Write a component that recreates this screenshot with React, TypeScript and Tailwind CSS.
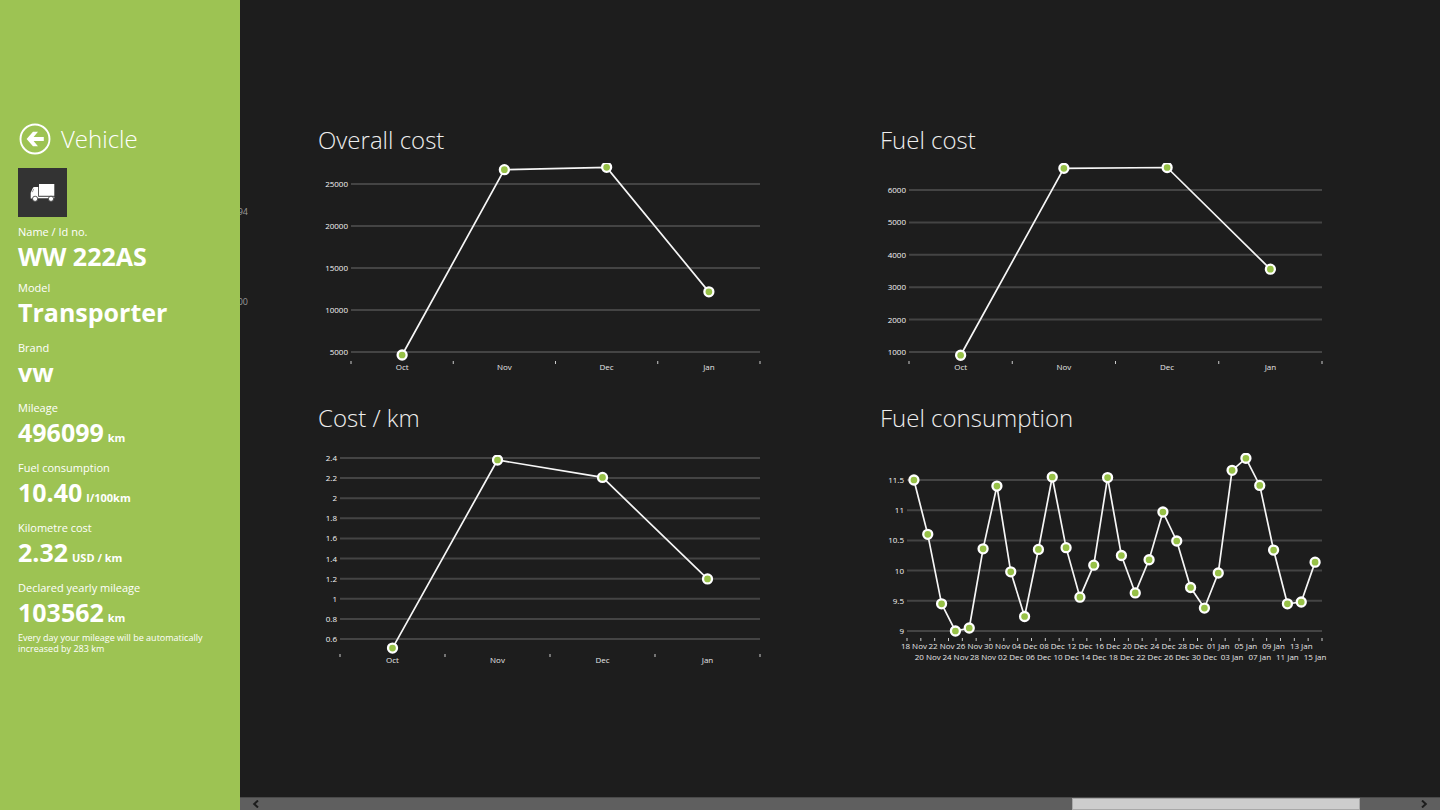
import React from 'react';

interface ChartProps {
  title: string;
  labels: string[];
  values: number[];
  ticks: number[];
  height: number;
  left: number;
  // y position and value of the lowest and highest grid lines
  yLow: number;
  yHigh: number;
  tickY: number;
  clipTop: number;
  labelY: number;
  stagger?: boolean;
}

const CHART_WIDTH = 448;
const PLOT_RIGHT = 442;

const LineChart: React.FC<ChartProps> = ({
  title,
  labels,
  values,
  ticks,
  height,
  left,
  yLow,
  yHigh,
  tickY,
  clipTop,
  labelY,
  stagger = false,
}) => {
  const low = ticks[0];
  const high = ticks[ticks.length - 1];
  const band = (PLOT_RIGHT - left) / values.length;
  const clipId = `clip-${title.replace(/\W+/g, '-').toLowerCase()}`;

  const getX = (index: number) => left + band * (index + 0.5);
  const getY = (value: number) => yLow - ((value - low) / (high - low)) * (yLow - yHigh);
  const points = values.map((value, i) => ({ x: getX(i), y: getY(value) }));

  return (
    <section>
      <h2 className="text-2xl leading-10 font-light">{title}</h2>
      <svg
        viewBox={`0 0 ${CHART_WIDTH} ${height}`}
        className="block h-auto w-full text-[8px]"
        role="img"
        aria-label={title}
      >
        <defs>
          <clipPath id={clipId}>
            <rect x="0" y={clipTop} width={CHART_WIDTH} height={height} />
          </clipPath>
        </defs>

        {/* Grid lines and y axis */}
        {ticks.map((tick) => (
          <g key={tick}>
            <line x1={left} x2={PLOT_RIGHT} y1={getY(tick)} y2={getY(tick)} stroke="#444444" strokeWidth="2" />
            <text x={left - 3} y={getY(tick) + 3} textAnchor="end" fill="#f4f4f4">
              {tick}
            </text>
          </g>
        ))}

        {/* X axis */}
        {Array.from({ length: values.length + 1 }, (_, i) => (
          <line
            key={i}
            x1={left + band * i}
            x2={left + band * i}
            y1={tickY}
            y2={tickY + 3}
            stroke="#cccccc"
          />
        ))}
        {labels.map((label, i) => (
          <text
            key={label}
            x={getX(i)}
            y={stagger && i % 2 === 1 ? labelY + 11 : labelY}
            textAnchor="middle"
            fill="#e6e6e6"
          >
            {label}
          </text>
        ))}

        <g clipPath={`url(#${clipId})`}>
          <polyline
            points={points.map((p) => `${p.x},${p.y}`).join(' ')}
            fill="none"
            stroke="#f6f6f6"
            strokeWidth="1.7"
          />
          {points.map((p, i) => (
            <circle key={i} cx={p.x} cy={p.y} r="4.5" fill="#97c147" stroke="#ffffff" strokeWidth="2.3" />
          ))}
        </g>
      </svg>
    </section>
  );
};

const MONTHS = ['Oct', 'Nov', 'Dec', 'Jan'];

const CONSUMPTION: [string, number][] = [
  ['18 Nov', 11.5],
  ['20 Nov', 10.6],
  ['22 Nov', 9.45],
  ['24 Nov', 9],
  ['26 Nov', 9.05],
  ['28 Nov', 10.36],
  ['30 Nov', 11.4],
  ['02 Dec', 9.98],
  ['04 Dec', 9.24],
  ['06 Dec', 10.35],
  ['08 Dec', 11.55],
  ['10 Dec', 10.38],
  ['12 Dec', 9.56],
  ['14 Dec', 10.09],
  ['16 Dec', 11.54],
  ['18 Dec', 10.25],
  ['20 Dec', 9.63],
  ['22 Dec', 10.18],
  ['24 Dec', 10.97],
  ['26 Dec', 10.49],
  ['28 Dec', 9.72],
  ['30 Dec', 9.38],
  ['01 Jan', 9.96],
  ['03 Jan', 11.66],
  ['05 Jan', 11.86],
  ['07 Jan', 11.41],
  ['09 Jan', 10.34],
  ['11 Jan', 9.45],
  ['13 Jan', 9.48],
  ['15 Jan', 10.14],
];

const CHARTS: ChartProps[] = [
  {
    title: 'Overall cost',
    labels: MONTHS,
    values: [4640, 26710, 26980, 12160],
    ticks: [5000, 10000, 15000, 20000, 25000],
    height: 220,
    left: 33,
    yLow: 192,
    yHigh: 24,
    tickY: 201,
    clipTop: 3,
    labelY: 210,
  },
  {
    title: 'Fuel cost',
    labels: MONTHS,
    values: [900, 6670, 6695, 3557],
    ticks: [1000, 2000, 3000, 4000, 5000, 6000],
    height: 220,
    left: 29,
    yLow: 192,
    yHigh: 30,
    tickY: 201,
    clipTop: 3,
    labelY: 210,
  },
  {
    title: 'Cost / km',
    labels: MONTHS,
    values: [0.51, 2.38, 2.207, 1.197],
    ticks: [0.6, 0.8, 1, 1.2, 1.4, 1.6, 1.8, 2, 2.2, 2.4],
    height: 232,
    left: 22,
    yLow: 201,
    yHigh: 20,
    tickY: 216,
    clipTop: 17,
    labelY: 225,
  },
  {
    title: 'Fuel consumption',
    labels: CONSUMPTION.map(([date]) => date),
    values: CONSUMPTION.map(([, value]) => value),
    ticks: [9, 9.5, 10, 10.5, 11, 11.5],
    height: 232,
    left: 27,
    yLow: 193,
    yHigh: 42,
    tickY: 200,
    clipTop: 15,
    labelY: 211,
    stagger: true,
  },
];

const DETAILS = [
  { label: 'Name / Id no.', value: 'WW 222AS' },
  { label: 'Model', value: 'Transporter' },
  { label: 'Brand', value: 'vw' },
  { label: 'Mileage', value: '496099', unit: 'km' },
  { label: 'Fuel consumption', value: '10.40', unit: 'l/100km' },
  { label: 'Kilometre cost', value: '2.32', unit: 'USD / km' },
  { label: 'Declared yearly mileage', value: '103562', unit: 'km' },
];

const BackIcon = () => (
  <svg viewBox="0 0 32 32" className="size-8" aria-hidden="true">
    <circle cx="16" cy="16" r="14.5" fill="none" stroke="#ffffff" strokeWidth="1.9" />
    <path d="M7.6 16 L14 8.8 H19 L14.6 13.9 H24.8 V18.1 H14.6 L19 23.2 H14 Z" fill="#ffffff" />
  </svg>
);

const TruckIcon = () => (
  <svg viewBox="0 0 49 49" className="size-full" aria-hidden="true">
    <path d="M21 16 H36.3 V27.8 H21 Z" fill="#ffffff" />
    <path d="M12.7 30.4 V24.8 L14.6 20.4 Q15.2 19 16.6 19 H20.2 V28.7 H36.3 V30.2 H20.2 V30.4 Z" fill="#ffffff" />
    <path d="M14.3 24.2 L15.7 20.9" fill="none" stroke="#333333" strokeWidth="0.5" />
    <circle cx="17.1" cy="30.8" r="2.6" fill="#ffffff" stroke="#333333" strokeWidth="0.8" />
    <circle cx="33" cy="30.8" r="2.6" fill="#ffffff" stroke="#333333" strokeWidth="0.8" />
  </svg>
);

const Sidebar = () => (
  <aside className="w-60 shrink-0 bg-[#9dc353] px-[18px] pt-[119px] text-white">
    <header className="flex h-10 items-center gap-[10px]">
      <button type="button" aria-label="Back" className="ml-px cursor-pointer">
        <BackIcon />
      </button>
      <h1 className="text-2xl leading-10 font-light">Vehicle</h1>
    </header>
    <div className="mt-[9px] mb-[7px] size-[49px] bg-[#333333]">
      <TruckIcon />
    </div>
    <dl>
      {DETAILS.map(({ label, value, unit }, i) => (
        <div key={label} className={i === 0 ? 'mb-2' : i === DETAILS.length - 1 ? 'mb-1' : 'mb-3'}>
          <dt className="text-[11px] leading-4">{label}</dt>
          <dd className="text-[25px] leading-8 font-bold">
            {value}
            {unit && <span className="ml-1 text-[11px] leading-none">{unit}</span>}
          </dd>
        </div>
      ))}
    </dl>
    <p className="text-[9px] leading-[11px]">
      Every day your mileage will be automatically
      <br />
      increased by 283 km
    </p>
  </aside>
);

const ScrollBar = () => (
  <div className="flex h-[13px] items-stretch border-t border-[#4a4a4a] bg-[#5f5f5f]">
    <button type="button" aria-label="Scroll left" className="flex w-8 items-center justify-center">
      <svg viewBox="0 0 8 8" className="size-2" aria-hidden="true">
        <path d="M6 0.5 L2.2 4 L6 7.5" fill="none" stroke="#1d1d1d" strokeWidth="2" />
      </svg>
    </button>
    <div className="flex grow">
      <div className="w-[70.4%]" />
      <div className="w-[25.4%] border border-[#a8a8a8] bg-[#cdcdcd]" />
    </div>
    <button type="button" aria-label="Scroll right" className="flex w-8 items-center justify-center">
      <svg viewBox="0 0 8 8" className="size-2" aria-hidden="true">
        <path d="M2 0.5 L5.8 4 L2 7.5" fill="none" stroke="#1d1d1d" strokeWidth="2" />
      </svg>
    </button>
  </div>
);

const App: React.FC = () => {
  return (
    <div className="flex min-h-screen bg-[#1d1d1d] font-['Open_Sans','Noto_Sans',sans-serif] text-[#eeeeee]">
      <Sidebar />
      <main className="flex min-w-0 grow flex-col">
        <div className="flex grow">
          {/* Tail of the previous section, scrolled under the sidebar */}
          <div className="flex w-2 shrink-0 flex-col items-end gap-[74px] overflow-hidden pt-[204px] text-[9px] leading-4 text-[#9a9a9a]">
            <span>94</span>
            <span>00</span>
          </div>
          <div className="grid grow grid-cols-2 content-start gap-x-[114px] gap-y-[18px] pt-[120px] pr-[112px] pl-[70px]">
            {CHARTS.map((chart) => (
              <LineChart key={chart.title} {...chart} />
            ))}
          </div>
        </div>
        <ScrollBar />
      </main>
    </div>
  );
};

export default App;
